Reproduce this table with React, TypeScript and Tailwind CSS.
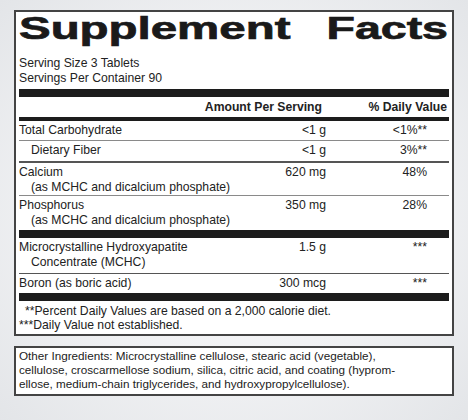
const rows = [
  { name: ['Total Carbohydrate'], indent: false, amount: '<1 g', dv: '<1%**', h: 'h-[19px]', rule: 'h-px bg-[#8a8a8a]' },
  { name: ['Dietary Fiber'], indent: true, amount: '<1 g', dv: '3%**', h: 'h-[20px]', rule: 'h-[2px] bg-[#555]' },
  { name: ['Calcium', '(as MCHC and dicalcium phosphate)'], indent: false, amount: '620 mg', dv: '48%', h: 'h-[32px]', rule: 'h-px bg-[#8a8a8a]' },
  { name: ['Phosphorus', '(as MCHC and dicalcium phosphate)'], indent: false, amount: '350 mg', dv: '28%', h: 'h-[34px]', rule: 'h-[8px] bg-[#1c1c1c]' },
  { name: ['Microcrystalline Hydroxyapatite', 'Concentrate (MCHC)'], indent: false, amount: '1.5 g', dv: '***', h: 'h-[35px]', rule: 'h-px bg-[#555]' },
  { name: ['Boron (as boric acid)'], indent: false, amount: '300 mcg', dv: '***', h: 'h-[19px]', rule: 'h-[8px] bg-[#1c1c1c]' },
];

export default function App() {
  return (
    <div className="h-[420px] w-[468px] overflow-hidden bg-[radial-gradient(ellipse_at_center,#fbfbfc_0%,#f0f1f3_55%,#e3e5e8_100%)] pt-[10px] pl-[14px] font-['Liberation_Sans',Arial,sans-serif] text-[12.2px] text-[#222]">
      <div className="w-[440px] border-2 border-[#444] bg-white px-[3px]">
        {/* title is stretched wide like the printed label */}
        <div className="mt-px flex h-[31px] justify-between pr-px text-[31px] font-bold leading-[31px] text-[#1a1a1a] [-webkit-text-stroke:0.7px_#1a1a1a]">
          <span className="inline-block origin-left scale-x-[1.53]">Supplement</span>
          <span className="inline-block origin-right scale-x-[1.5]">Facts</span>
        </div>
        <div className="mt-[12px] leading-[15px]">
          <p>Serving Size 3 Tablets</p>
          <p>Servings Per Container 90</p>
        </div>
        <div className="mt-[3px] h-[8px] bg-[#1c1c1c]" />
        <div className="flex h-[20px] items-center justify-end font-bold">
          <span className="mr-[27px]">Amount Per Serving</span>
          <span className="w-[100px] pr-[2px] text-right">% Daily Value</span>
        </div>
        <div className="h-[4px] bg-[#1c1c1c]" />
        {rows.map(r => (
          <div key={r.name[0]}>
            <div className={`flex pt-[2px] leading-[15px] ${r.h}`}>
              <div className={`min-w-0 flex-1 whitespace-nowrap ${r.indent ? 'pl-[12px]' : ''}`}>
                {r.name.map((n, i) => (
                  <p key={n} className={i > 0 ? 'pl-[12px]' : ''}>
                    {n}
                  </p>
                ))}
              </div>
              <span className="mr-[22px] w-[60px] text-right">{r.amount}</span>
              <span className="w-[101px] pr-[22px] text-right">{r.dv}</span>
            </div>
            <div className={r.rule} />
          </div>
        ))}
        <div className="pt-[3px] pb-[2px] leading-[14px]">
          <p className="pl-[6px]">**Percent Daily Values are based on a 2,000 calorie diet.</p>
          <p>***Daily Value not established.</p>
        </div>
      </div>
      <div className="mt-[10px] w-[440px] whitespace-nowrap border-2 border-[#444] bg-white px-[3px] pt-px pb-[3px] text-[11.7px] leading-[14px]">
        <p>Other Ingredients: Microcrystalline cellulose, stearic acid (vegetable),</p>
        <p>cellulose, croscarmellose sodium, silica, citric acid, and coating (hyprom-</p>
        <p>ellose, medium-chain triglycerides, and hydroxypropylcellulose).</p>
      </div>
    </div>
  );
}
